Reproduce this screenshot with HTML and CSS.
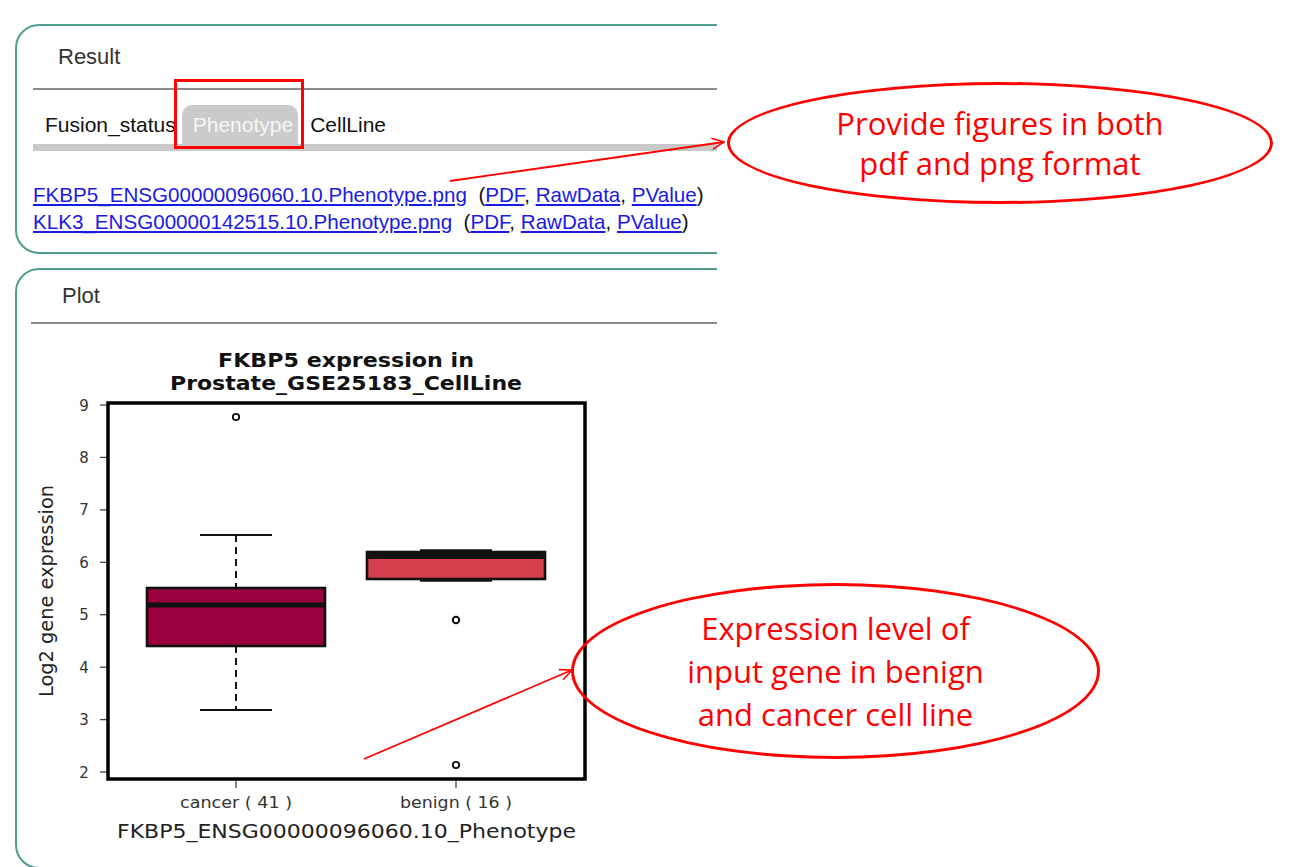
FILE: index.html
```html
<!DOCTYPE html>
<html lang="en">
<head>
<meta charset="utf-8">
<title>Result / Plot</title>
<link rel="stylesheet" href="styles.css">
</head>
<body>
<div class="page">
  <div class="col">
    <section class="panel panel-result">
      <div class="panel-head">Result</div>
      <div class="tabs">
        <span class="tab">Fusion_status</span>
        <span class="tab tab-active">Phenotype</span>
        <span class="tab">CellLine</span>
      </div>
      <div class="links">
        <div class="row"><a href="#">FKBP5_ENSG00000096060.10.Phenotype.png</a>&nbsp;&nbsp;(<a href="#">PDF</a>, <a href="#">RawData</a>, <a href="#">PValue</a>)</div>
        <div class="row"><a href="#">KLK3_ENSG00000142515.10.Phenotype.png</a>&nbsp;&nbsp;(<a href="#">PDF</a>, <a href="#">RawData</a>, <a href="#">PValue</a>)</div>
      </div>
    </section>

    <section class="panel panel-plot">
      <div class="panel-head">Plot</div>
      <svg class="chart" viewBox="31 324 600 543" width="600" height="543" xmlns="http://www.w3.org/2000/svg">
        <g class="ttl">
          <text x="346" y="367" text-anchor="middle" textLength="256" lengthAdjust="spacingAndGlyphs">FKBP5 expression in</text>
          <text x="346" y="390" text-anchor="middle" textLength="352" lengthAdjust="spacingAndGlyphs">Prostate_GSE25183_CellLine</text>
        </g>
        <!-- y ticks -->
        <g stroke="#444" stroke-width="1.3">
          <line x1="100" y1="405" x2="108" y2="405"/>
          <line x1="100" y1="457.4" x2="108" y2="457.4"/>
          <line x1="100" y1="509.9" x2="108" y2="509.9"/>
          <line x1="100" y1="562.3" x2="108" y2="562.3"/>
          <line x1="100" y1="614.7" x2="108" y2="614.7"/>
          <line x1="100" y1="667.2" x2="108" y2="667.2"/>
          <line x1="100" y1="719.6" x2="108" y2="719.6"/>
          <line x1="100" y1="772" x2="108" y2="772"/>
          <line x1="236" y1="781" x2="236" y2="788"/>
          <line x1="456" y1="781" x2="456" y2="788"/>
        </g>
        <g class="tick" text-anchor="middle">
          <text x="84" y="410.5">9</text>
          <text x="84" y="462.9">8</text>
          <text x="84" y="515.4">7</text>
          <text x="84" y="567.8">6</text>
          <text x="84" y="620.2">5</text>
          <text x="84" y="672.7">4</text>
          <text x="84" y="725.1">3</text>
          <text x="84" y="777.5">2</text>
        </g>
        <text class="ylab" transform="translate(53 591) rotate(-90)" text-anchor="middle" textLength="212" lengthAdjust="spacingAndGlyphs">Log2 gene expression</text>

        <!-- cancer -->
        <g stroke="#111" fill="none">
          <line x1="236" y1="535" x2="236" y2="588" stroke-width="2" stroke-dasharray="7 5"/>
          <line x1="236" y1="646" x2="236" y2="710" stroke-width="2" stroke-dasharray="7 5"/>
          <line x1="200" y1="535" x2="272" y2="535" stroke-width="2"/>
          <line x1="200" y1="710" x2="272" y2="710" stroke-width="2"/>
          <rect x="147" y="588" width="178" height="58" fill="#99003d" stroke-width="2.6"/>
          <line x1="147" y1="605" x2="325" y2="605" stroke-width="5"/>
          <circle cx="236" cy="417" r="3.2" stroke-width="1.8"/>
        </g>
        <!-- benign -->
        <g stroke="#111" fill="none">
          <line x1="420" y1="550.5" x2="492" y2="550.5" stroke-width="2.6"/>
          <line x1="420" y1="580.5" x2="492" y2="580.5" stroke-width="2.4"/>
          <rect x="367" y="552" width="178" height="27" fill="#d5404f" stroke-width="2.6"/>
          <line x1="367" y1="556" x2="545" y2="556" stroke-width="6"/>
          <circle cx="456" cy="620" r="3.2" stroke-width="2"/>
          <circle cx="456" cy="765" r="3.2" stroke-width="1.8"/>
        </g>
        <rect x="108" y="403" width="477" height="376" fill="none" stroke="#000" stroke-width="3.5"/>

        <g class="xlab" text-anchor="middle">
          <text x="236" y="808" textLength="112" lengthAdjust="spacingAndGlyphs">cancer ( 41 )</text>
          <text x="456" y="808" textLength="112" lengthAdjust="spacingAndGlyphs">benign ( 16 )</text>
        </g>
        <text class="xtitle" x="346.5" y="838" text-anchor="middle" textLength="459" lengthAdjust="spacingAndGlyphs">FKBP5_ENSG00000096060.10_Phenotype</text>
      </svg>
    </section>
  </div>

  <div class="mark"></div>

  <svg class="arrows" viewBox="0 0 1290 867" width="1290" height="867" xmlns="http://www.w3.org/2000/svg">
    <defs>
      <marker id="ah" viewBox="0 0 14 14" refX="13" refY="7" markerWidth="14" markerHeight="14" markerUnits="userSpaceOnUse" orient="auto">
        <path d="M1 1.5 L13 7 L1 12.5" fill="none" stroke="#ff0000" stroke-width="1.6"/>
      </marker>
    </defs>
    <line x1="450" y1="181" x2="724" y2="142" stroke="#ff0000" stroke-width="1.8" marker-end="url(#ah)"/>
    <line x1="364" y1="759" x2="572" y2="670" stroke="#ff0000" stroke-width="1.8" marker-end="url(#ah)"/>
  </svg>

  <div class="callout callout-1"><p>Provide figures in both<br>pdf and png format</p></div>
  <div class="callout callout-2"><p>Expression level of<br>input gene in benign<br>and cancer cell line</p></div>
</div>
</body>
</html>
```

FILE: styles.css
```css
* { box-sizing: border-box; }

html, body {
  margin: 0;
  padding: 0;
  background: #ffffff;
}

body {
  font-family: "Liberation Sans", Arial, sans-serif;
  color: #222;
}

.page {
  position: relative;
  width: 1290px;
  height: 867px;
  overflow: hidden;
}

.col {
  width: 717px;
  height: 867px;
  overflow: hidden;
  padding-top: 24px;
}

.panel {
  margin-left: 15px;
  width: 780px;
  border: 2px solid #4f9d90;
  border-radius: 24px;
  background: #ffffff;
}

.panel-result {
  padding-bottom: 17px;
}

.panel-plot {
  margin-top: 14px;
}

.panel-head {
  height: 64px;
  margin-left: 16px;
  padding-left: 25px;
  border-bottom: 2px solid #8a8a8a;
  display: flex;
  align-items: center;
  font-size: 22px;
  color: #333;
}

.panel-plot .panel-head {
  height: 54px;
  margin-left: 14px;
  padding-left: 31px;
}

.tabs {
  display: flex;
  align-items: flex-end;
  height: 61px;
  margin-left: 16px;
  border-bottom: 7px solid #c9c9c9;
  font-size: 21px;
  color: #111;
}

.tab {
  height: 39px;
  line-height: 39px;
  padding: 0 6px 0 12px;
  white-space: nowrap;
}

.tab-active {
  background: #cbcbcb;
  color: #f6f6f6;
  border-radius: 10px 10px 0 0;
  padding: 0 5px 0 11px;
}

.links {
  padding: 30px 0 0 16px;
  font-size: 20.6px;
  line-height: 27px;
  color: #111;
  white-space: nowrap;
}

.links a {
  color: #1a1ae6;
  text-decoration: underline;
}

.chart {
  display: block;
  margin-left: 14px;
}

.chart text {
  font-family: "DejaVu Sans", sans-serif;
}

.chart .ttl text {
  font-size: 19px;
  font-weight: bold;
  fill: #111;
}

.chart .tick text {
  font-size: 15px;
  fill: #333;
}

.chart .ylab {
  font-size: 19px;
  fill: #222;
}

.chart .xlab text {
  font-size: 15px;
  fill: #333;
}

.chart .xtitle {
  font-size: 19px;
  fill: #222;
}

.mark {
  position: absolute;
  left: 174px;
  top: 79px;
  width: 130px;
  height: 70px;
  border: 3px solid #ff0000;
}

.arrows {
  position: absolute;
  left: 0;
  top: 0;
  pointer-events: none;
}

.callout {
  position: absolute;
  border: 3.5px solid #ff0000;
  border-radius: 50%;
  display: flex;
  align-items: center;
  justify-content: center;
  text-align: center;
  font-family: "Open Sans", "Noto Sans", sans-serif;
  font-size: 31px;
  color: #ff0000;
}

.callout p {
  margin: 0;
}

.callout-1 {
  left: 727px;
  top: 82px;
  width: 546px;
  height: 122px;
  line-height: 40px;
}

.callout-2 {
  left: 571px;
  top: 583px;
  width: 529px;
  height: 176px;
  line-height: 43px;
}
```
